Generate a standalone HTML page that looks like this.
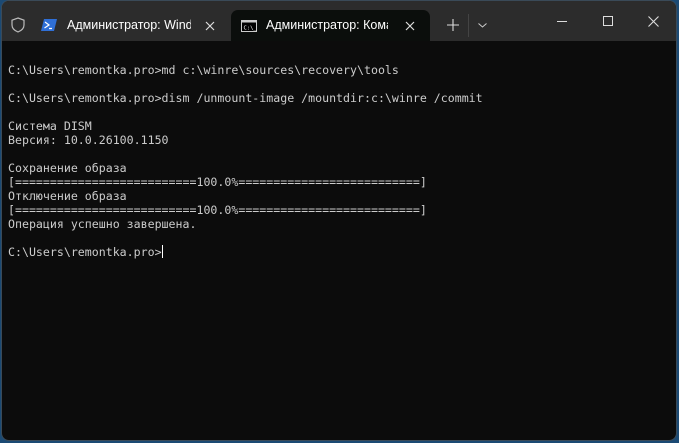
<!DOCTYPE html>
<html><head><meta charset="utf-8"><style>
html,body{margin:0;padding:0;width:679px;height:443px;overflow:hidden;background:#1b4a74;}
.win{position:absolute;left:1px;top:0;width:676px;height:441px;background:#0c0c0c;border-radius:8px;overflow:hidden;border:1px solid #3a4a58;box-sizing:border-box;}
.tb{position:absolute;left:0;top:0;width:100%;height:40px;background:#2c2c2c;}
.tab{position:absolute;top:9px;height:31px;background:#0b0e0c;left:229px;width:199px;border-radius:7px 7px 0 0;}
.t{position:absolute;font-family:"Liberation Sans","DejaVu Sans",sans-serif;font-size:12.5px;color:#fff;white-space:nowrap;overflow:hidden;}
.term{position:absolute;left:6px;top:62px;font-family:"DejaVu Sans Mono","Liberation Mono",monospace;font-size:11.6px;line-height:14px;color:#cccccc;white-space:pre;margin:0;}
.cur{display:inline-block;width:1px;height:13px;background:#fff;vertical-align:-2px;}
</style></head><body>
<div class="win">
 <div class="tb">
  <svg style="position:absolute;left:9px;top:16px" width="14" height="16" viewBox="0 0 14 16"><path d="M7 1 L13 3.2 V8 C13 11.5 10 13.8 7 15 C4 13.8 1 11.5 1 8 V3.2 Z" fill="none" stroke="#bbb" stroke-width="1.2"/></svg>
  <svg style="position:absolute;left:39px;top:18px" width="16" height="12" viewBox="0 0 16 12"><path d="M3 0H16L13 12H0Z" fill="#2f6fd6"/><path d="M4 3L8 6L3.5 9" stroke="#fff" stroke-width="1.2" fill="none"/><path d="M8 9.5H11" stroke="#fff" stroke-width="1.2"/></svg>
  <div class="t" style="left:65px;top:17px;width:124px;">Администратор: Windows</div>
  <svg style="position:absolute;left:203px;top:20px" width="10" height="10"><path d="M1 1L9 9M9 1L1 9" stroke="#ddd" stroke-width="1.2"/></svg>
  <div class="tab"></div>
  <svg style="position:absolute;left:239px;top:19px" width="16" height="12" viewBox="0 0 16 12"><rect x="0.5" y="0.5" width="15" height="11" fill="#000" stroke="#ccc"/><rect x="0.5" y="0.5" width="15" height="2" fill="#ccc"/><text x="2.5" y="9.5" font-size="5.5" fill="#fff" font-family="DejaVu Sans Mono">C:\_</text></svg>
  <div class="t" style="left:264px;top:17px;width:122px;">Администратор: Командная</div>
  <svg style="position:absolute;left:403px;top:20px" width="10" height="10"><path d="M1 1L9 9M9 1L1 9" stroke="#ddd" stroke-width="1.2"/></svg>
  <svg style="position:absolute;left:445px;top:18px" width="12" height="12"><path d="M6 0V12M0 6H12" stroke="#ddd" stroke-width="1.1"/></svg>
  <div style="position:absolute;left:466px;top:13px;width:1px;height:23px;background:#444"></div>
  <svg style="position:absolute;left:476px;top:22px" width="9" height="5"><path d="M0.5 0.5L4.5 4L8.5 0.5" stroke="#ccc" fill="none"/></svg>
  <div style="position:absolute;left:555px;top:20px;width:10px;height:1px;background:#ddd"></div>
  <div style="position:absolute;left:601px;top:15px;width:8px;height:8px;border:1px solid #ddd"></div>
  <svg style="position:absolute;left:646px;top:15px" width="11" height="11"><path d="M0.5 0.5L10.5 10.5M10.5 0.5L0.5 10.5" stroke="#ddd" stroke-width="1.1"/></svg>
 </div>
<pre class="term">C:\Users\remontka.pro&gt;md c:\winre\sources\recovery\tools

C:\Users\remontka.pro&gt;dism /unmount-image /mountdir:c:\winre /commit

Система DISM
Версия: 10.0.26100.1150

Сохранение образа
[==========================100.0%==========================]
Отключение образа
[==========================100.0%==========================]
Операция успешно завершена.

C:\Users\remontka.pro&gt;<span class="cur"></span></pre>
</div>
</body></html>
